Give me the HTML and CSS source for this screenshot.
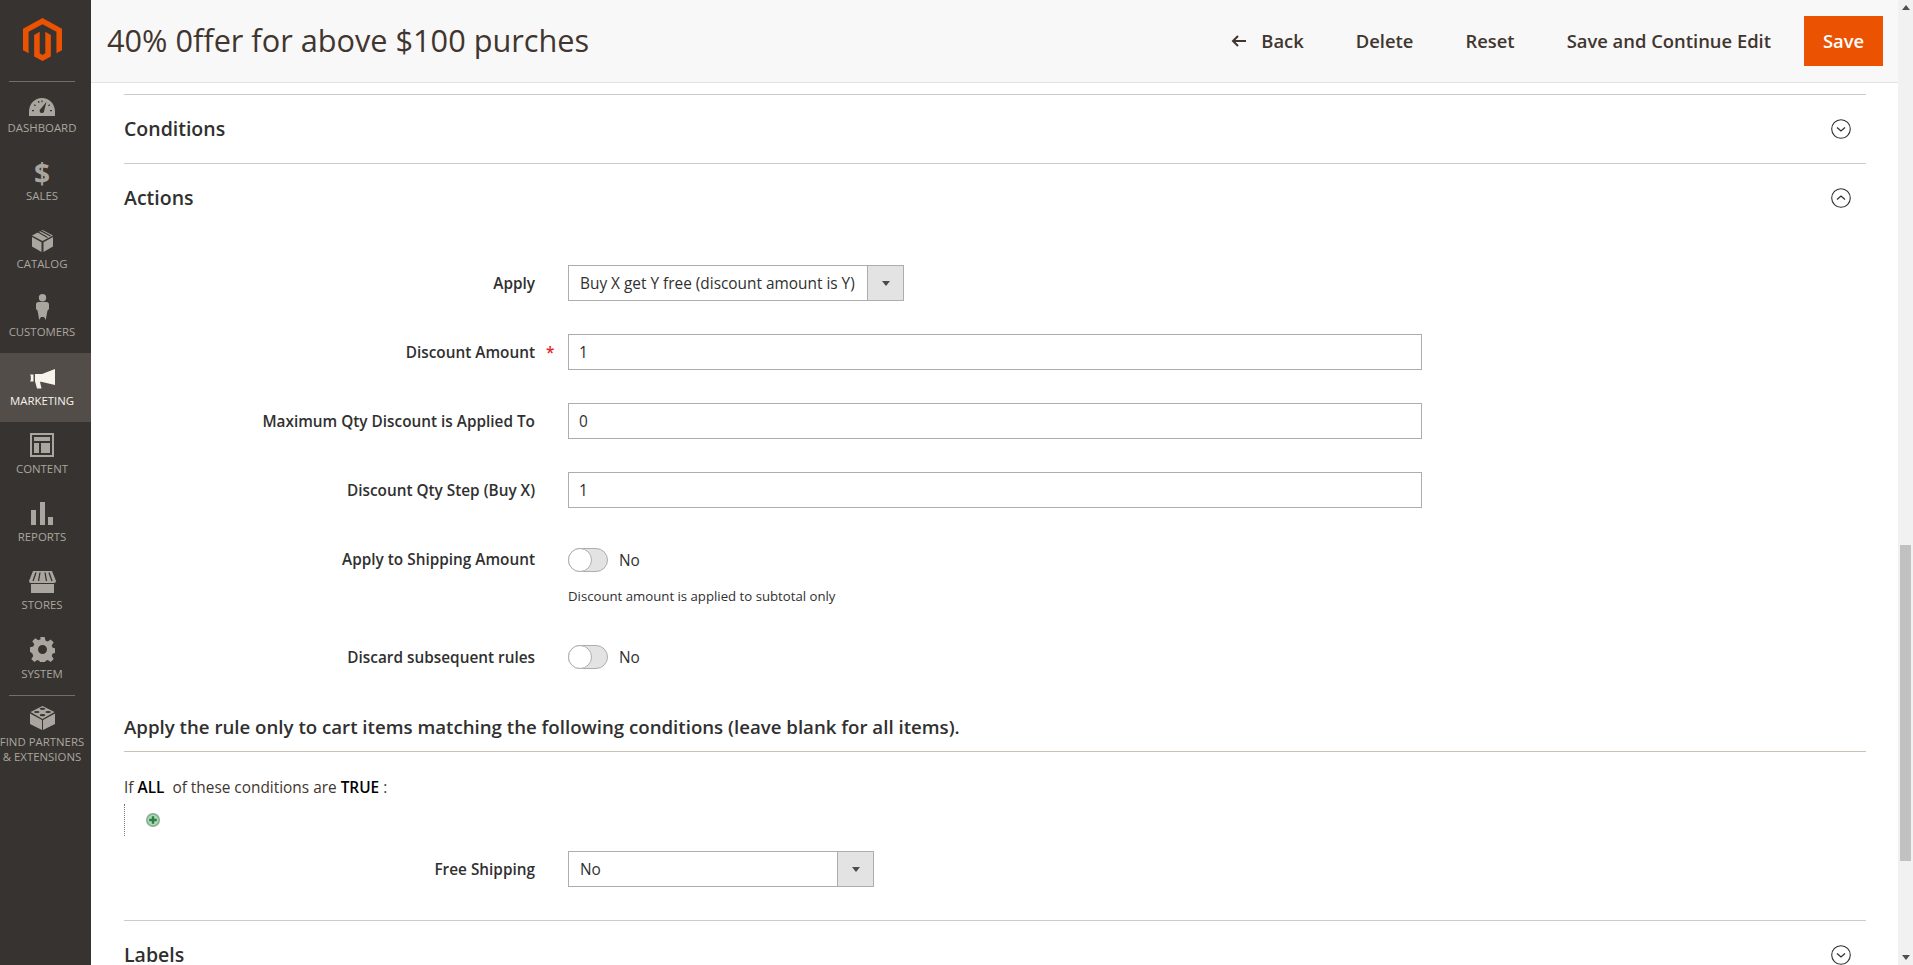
FILE: index.html
```html
<!DOCTYPE html>
<html>
<head>
    <title>40% 0ffer for above $100 purches</title>
    <link rel="stylesheet" href="styles.css">
</head>
<body>
    <div class="app">
        <nav class="sidebar">
            <div class="logo">
                <svg width="39" height="43" viewBox="1.609 0 20.782 24" preserveAspectRatio="none"><path fill="#eb5202" d="M12 24l-4.455-2.572v-12l2.97-1.715v12.001l1.485.902 1.485-.902V7.713l2.971 1.715v12L12 24zM22.391 6v12l-2.969 1.714V7.713L12 3.43 4.574 7.713v12.001L1.609 18V6L12 0l10.391 6z"/></svg>
            </div>
            <ul class="menu">
                <li class="menu-item">
                    <svg width="26" height="18" viewBox="0 0 26 18"><path fill="#aaa69f" fill-rule="evenodd" d="M13 0C5.800 0 .5 5.500 0 13v5h26v-5C25.500 5.500 20.200 0 13 0zM12 10.600 17.500 3.800 15.200 12.400a2.300 2.300 0 1 1-3.200-1.800zM3 12H5V13.200H3zM21 12h2v1.200h-2zM5.500 6.300 7 7.300 6.300 8.300 4.800 7.300zM20.500 6.300l.7 1-1.500 1-.7-1zM10 2.800l.6 1.700-1.200.4-.6-1.700zM13.600 2.400V4.200H12.400V2.400z"/></svg>
                    <span>Dashboard</span>
                </li>
                <li class="menu-item">
                    <span class="dollar">$</span>
                    <span>Sales</span>
                </li>
                <li class="menu-item">
                    <svg width="21" height="22" viewBox="0 0 21 22"><path fill="#aaa69f" d="M10.500 0 21 5.500 10.500 11 0 5.500zM0 7l9.500 5.200V22L0 16.500zM21 7v9.500L11.500 22v-9.800z"/><path fill="none" stroke="#373330" stroke-width="1.200" d="M5.500 1.800 15.500 7.400M8.500 .6 18.500 6"/></svg>
                    <span>Catalog</span>
                </li>
                <li class="menu-item">
                    <svg width="13" height="26" viewBox="0 0 13 26"><circle cx="6.500" cy="3.700" r="3.700" fill="#aaa69f"/><path fill="#aaa69f" d="M2.500 8h8c1.500 0 2.500 1 2.500 2.500V15l-1.500 1.500-.7 3.500-1 6-1.800-3-1.500 0-1.500 0L3.200 26l-1-6-.7-3.500L0 15v-4.500C0 9 1 8 2.500 8z"/></svg>
                    <span>Customers</span>
                </li>
                <li class="menu-item active">
                    <svg width="25" height="20" viewBox="0 0 25 20"><path fill="#f7f3eb" d="M25 0v16L11 12.800h-1l1.500 6.700H7L5 12.300V5h7zM0 5.500h3.500v7H0L.8 11V7z"/></svg>
                    <span>Marketing</span>
                </li>
                <li class="menu-item">
                    <svg width="24" height="24" viewBox="0 0 24 24"><path fill="#aaa69f" fill-rule="evenodd" d="M0 0h24v24H0zM2 2v20h20V2zM4 4h16v4H4zM4 10h5v10H4zM11 10h9v10h-9z"/></svg>
                    <span>Content</span>
                </li>
                <li class="menu-item">
                    <svg width="22" height="23" viewBox="0 0 22 23"><path fill="#aaa69f" d="M0 8h5v15H0zM9 0h5v23H9zM17 15h5v8h-5z"/></svg>
                    <span>Reports</span>
                </li>
                <li class="menu-item">
                    <svg width="27" height="22" viewBox="0 0 27 22"><path fill="#aaa69f" d="M4 0h19l4 10c0 1-.8 2-2 2v10H2V12c-1.200 0-2-1-2-2z"/><path stroke="#373330" stroke-width="1.300" d="M7 1.500 4 10M11 1.500 9.500 10M16 1.500 17.500 10M20 1.500 23 10"/><path stroke="#373330" stroke-width="1" d="M2 12.500h23" fill="none"/></svg>
                    <span>Stores</span>
                </li>
                <li class="menu-item">
                    <svg width="25" height="25" viewBox="0 0 25 25"><path fill="#aaa69f" fill-rule="evenodd" d="M10.300 0h4.400l.7 3.500 2.300 1 3-2 3 3-2 3 1 2.300 3.300.7v4.400l-3.300.7-1 2.300 2 3-3 3-3-2-2.300 1-.7 3.300h-4.400l-.7-3.300-2.300-1-3 2-3-3 2-3-1-2.300L0 14.700v-4.400l3.300-.7 1-2.300-2-3 3-3 3 2 2.300-1zM12.500 8a4.500 4.500 0 1 0 0 9 4.500 4.500 0 0 0 0-9z"/></svg>
                    <span>System</span>
                </li>
            </ul>
            <div class="menu-item partners">
                <svg width="25" height="24" viewBox="0 0 25 24"><path fill="#aaa69f" d="M0 7.500 12 14v10L0 18zM25 7.500V18l-12 6V14z"/><path fill="#aaa69f" d="M12.500 0 24.500 6 12.500 13 .5 6z"/><g fill="#373330"><ellipse cx="12.500" cy="2.800" rx="2.800" ry="1.100"/><ellipse cx="6.800" cy="6" rx="2.800" ry="1.100"/><ellipse cx="18.200" cy="6" rx="2.800" ry="1.100"/><ellipse cx="12.500" cy="9.200" rx="2.800" ry="1.100"/></g></svg>
                <span>Find Partners<br>&amp; Extensions</span>
            </div>
        </nav>

        <div class="main">
            <header class="page-header">
                <h1>40% 0ffer for above $100 purches</h1>
                <div class="page-actions">
                    <button type="button" class="action">
                        <svg width="16" height="12" viewBox="0 0 16 12"><path fill="none" stroke="#41362f" stroke-width="2" d="M15 6H2M7 1 2 6l5 5"/></svg>
                        Back
                    </button>
                    <button type="button" class="action">Delete</button>
                    <button type="button" class="action">Reset</button>
                    <button type="button" class="action">Save and Continue Edit</button>
                    <button type="button" class="action-save">Save</button>
                </div>
            </header>

            <div class="content">
                <div class="section-head">
                    <h2>Conditions</h2>
                    <svg class="chevron" width="20" height="20" viewBox="0 0 20 20"><circle cx="10" cy="10" r="9.300" fill="none" stroke="#303030" stroke-width="1.100"/><path fill="none" stroke="#303030" stroke-width="1.300" d="M6 8.500l4 3.500 4-3.500"/></svg>
                </div>
                <div class="section-head open">
                    <h2>Actions</h2>
                    <svg class="chevron" width="20" height="20" viewBox="0 0 20 20"><circle cx="10" cy="10" r="9.300" fill="none" stroke="#303030" stroke-width="1.100"/><path fill="none" stroke="#303030" stroke-width="1.300" d="M6 11.500l4-3.500 4 3.500"/></svg>
                </div>

                <form class="fields">
                    <div class="field">
                        <label>Apply</label>
                        <span class="req"></span>
                        <div class="select-box select-wide">
                            <select><option>Buy X get Y free (discount amount is Y)</option></select>
                            <span class="select-arrow"></span>
                        </div>
                    </div>
                    <div class="field">
                        <label>Discount Amount</label>
                        <span class="req">*</span>
                        <input type="text" value="1">
                    </div>
                    <div class="field">
                        <label>Maximum Qty Discount is Applied To</label>
                        <span class="req"></span>
                        <input type="text" value="0">
                    </div>
                    <div class="field">
                        <label>Discount Qty Step (Buy X)</label>
                        <span class="req"></span>
                        <input type="text" value="1">
                    </div>
                    <div class="field field-toggle">
                        <label>Apply to Shipping Amount</label>
                        <span class="req"></span>
                        <div class="toggle-wrap">
                            <span class="toggle"><span class="knob"></span></span>
                            <span class="toggle-text">No</span>
                        </div>
                        <p class="note">Discount amount is applied to subtotal only</p>
                    </div>
                    <div class="field field-last">
                        <label>Discard subsequent rules</label>
                        <span class="req"></span>
                        <div class="toggle-wrap">
                            <span class="toggle"><span class="knob"></span></span>
                            <span class="toggle-text">No</span>
                        </div>
                    </div>
                </form>

                <h3 class="sub-title">Apply the rule only to cart items matching the following conditions (leave blank for all items).</h3>
                <p class="rule-line">If <strong>ALL</strong>&nbsp; of these conditions are <strong>TRUE</strong> :</p>
                <div class="rule-tree">
                    <svg width="14" height="14" viewBox="0 0 14 14"><circle cx="7" cy="7" r="7" fill="#86b291"/><circle cx="7" cy="7" r="5.300" fill="#b4d6ba"/><path stroke="#2a7f42" stroke-width="2.400" d="M7 3.200v7.600M3.200 7h7.600"/></svg>
                </div>

                <div class="field field-shipping">
                    <label>Free Shipping</label>
                    <span class="req"></span>
                    <div class="select-box select-narrow">
                        <select><option>No</option></select>
                        <span class="select-arrow"></span>
                    </div>
                </div>

                <div class="section-head">
                    <h2>Labels</h2>
                    <svg class="chevron" width="20" height="20" viewBox="0 0 20 20"><circle cx="10" cy="10" r="9.300" fill="none" stroke="#303030" stroke-width="1.100"/><path fill="none" stroke="#303030" stroke-width="1.300" d="M6 8.500l4 3.500 4-3.500"/></svg>
                </div>
            </div>
        </div>

        <div class="scrollbar">
            <span class="arrow-up"></span>
            <div class="scroll-track"><div class="scroll-thumb"></div></div>
            <span class="arrow-down"></span>
        </div>
    </div>
</body>
</html>
```

FILE: styles.css
```css
* {
    box-sizing: border-box;
}

html, body {
    margin: 0;
    height: 100%;
    overflow: hidden;
}

body {
    font-family: "Open Sans", Arial, sans-serif;
    font-size: 14px;
    color: #41362f;
    background: #fff;
}

.app {
    display: grid;
    grid-template-columns: 91px 1fr 15px;
    height: 965px;
}

/* sidebar */
.sidebar {
    background: #373330;
    height: 965px;
}

.logo {
    display: flex;
    justify-content: center;
    padding: 18px 7px 0 0;
    height: 81px;
}

.menu {
    list-style: none;
    margin: 0 16px 0 9px;
    padding: 0;
    border-top: 1px solid #736e69;
    border-bottom: 1px solid #736e69;
}

.menu-item {
    height: 68.25px;
    margin: 0 -16px 0 -9px;
    display: flex;
    flex-direction: column;
    align-items: center;
    justify-content: flex-end;
    padding: 0 7px 14px 0;
    gap: 5px;
    color: #aaa69f;
    font-size: 11.4px;
    line-height: 14px;
    text-transform: uppercase;
    text-align: center;
}

.menu-item:first-child {
    height: 66.5px;
    padding-bottom: 14px;
}

.menu-item svg {
    flex: none;
}

.menu-item.active {
    background: #524d49;
    color: #f7f3eb;
}

.dollar {
    font-size: 28px;
    font-weight: 700;
    line-height: 26px;
    margin-bottom: -2px;
}

.partners {
    height: auto;
    justify-content: flex-start;
    padding-top: 10px;
    margin: 0;
    gap: 4px;
    line-height: 15px;
    white-space: nowrap;
}

/* page header */
.main {
    min-width: 0;
    height: 965px;
    overflow: hidden;
}

.page-header {
    height: 83px;
    background: #f8f8f8;
    border-bottom: 1px solid #e3e3e3;
    display: flex;
    align-items: center;
    justify-content: space-between;
    padding: 0 15px 1px 16px;
}

h1 {
    margin: 0 0 2px;
    font-size: 30.7px;
    font-weight: 400;
    color: #41362f;
}

.page-actions {
    display: flex;
    align-items: center;
    gap: 0;
}

.action {
    background: none;
    border: 0;
    padding: 0 26px;
    font-family: inherit;
    font-size: 18.4px;
    font-weight: 600;
    color: #41362f;
    display: flex;
    align-items: center;
    gap: 14px;
}

.action-save {
    width: 79px;
    height: 50px;
    margin-left: 7px;
    background: #eb5202;
    border: 0;
    color: #fff;
    font-family: inherit;
    font-size: 18.4px;
    font-weight: 600;
}

/* sections */
.content {
    padding: 11px 32px 0 33px;
}

.section-head {
    height: 69px;
    border-top: 1px solid #cccccc;
    display: flex;
    align-items: center;
    justify-content: space-between;
    padding-right: 15px;
}

.section-head.open {
    height: 102px;
    align-items: flex-start;
    padding-top: 24px;
}

h2 {
    margin: 0;
    font-size: 19.5px;
    line-height: 26px;
    font-weight: 600;
    color: #303030;
}

.section-head.open h2 {
    margin-top: -3px;
}

.fields {
    display: block;
}

.field {
    display: grid;
    grid-template-columns: 411px 33px 854px;
    align-items: start;
    min-height: 36px;
    margin-bottom: 33px;
}

.field label {
    text-align: right;
    font-size: 15.35px;
    line-height: 36px;
    font-weight: 600;
    color: #303030;
}

.req {
    color: #e22626;
    font-size: 15.3px;
    line-height: 36px;
    font-weight: 600;
    padding-left: 11px;
}

.field input {
    height: 36px;
    width: 100%;
    border: 1px solid #adadad;
    padding: 0 10px;
    font-family: inherit;
    font-size: 15.4px;
    color: #303030;
    background: #fff;
}

.select-box {
    display: flex;
    height: 36px;
    border: 1px solid #adadad;
    background: #fff;
}

.select-wide {
    width: 336px;
}

.select-narrow {
    width: 306px;
}

.select-box select {
    flex: 1;
    min-width: 0;
    appearance: none;
    border: 0;
    background: none;
    padding: 0 11px;
    font-family: inherit;
    font-size: 15.4px;
    color: #303030;
}

.select-arrow {
    width: 36px;
    background: #e3e3e3;
    border-left: 1px solid #adadad;
    display: flex;
    align-items: center;
    justify-content: center;
}

.select-arrow::after {
    content: "";
    border-left: 4px solid transparent;
    border-right: 4px solid transparent;
    border-top: 5px solid #514943;
}

.toggle-wrap {
    display: flex;
    align-items: center;
    gap: 11px;
    height: 36px;
}

.toggle {
    display: block;
    width: 40px;
    height: 24px;
    border: 1px solid #adadad;
    border-radius: 12px;
    background: #e3e3e3;
    margin: 0;
}

.knob {
    display: block;
    width: 24px;
    height: 24px;
    margin: -1px 0 0 -1px;
    border: 1px solid #adadad;
    border-radius: 50%;
    background: #fff;
}

.toggle-text {
    font-size: 15.4px;
    color: #303030;
}

.field-toggle {
    margin-bottom: 34px;
}

.field-toggle .toggle-wrap {
    margin-top: 1px;
}

.note {
    grid-column: 3;
    margin: 9px 0 0;
    font-size: 13.2px;
    line-height: 18px;
    color: #303030;
}

.field-last {
    margin-bottom: 40px;
}

.sub-title {
    margin: 0;
    font-size: 18.66px;
    font-weight: 600;
    color: #303030;
    line-height: 24px;
    padding-bottom: 12px;
    border-bottom: 1px solid #cac3b4;
}

.rule-line {
    margin: 26px 0 0;
    font-size: 15.4px;
    line-height: 20px;
    color: #41362f;
}

.rule-line strong {
    color: #000;
    font-weight: 600;
}

.rule-tree {
    height: 32px;
    margin-top: 6px;
    border-left: 1px dotted #777;
    padding: 9px 0 0 21px;
    display: flex;
    align-items: flex-start;
}

.field-shipping {
    margin: 15px 0 33px;
}

/* scrollbar */
.scrollbar {
    background: #f1f1f1;
    height: 965px;
    display: flex;
    flex-direction: column;
    align-items: center;
}

.arrow-up, .arrow-down {
    display: block;
    height: 15px;
    width: 8px;
    flex: none;
    position: relative;
}

.arrow-up::after, .arrow-down::after {
    content: "";
    position: absolute;
    left: 0;
    top: 5px;
    border-left: 4px solid transparent;
    border-right: 4px solid transparent;
}

.arrow-up::after {
    border-bottom: 5px solid #505050;
}

.arrow-down::after {
    border-top: 5px solid #505050;
}

.scroll-track {
    flex: 1;
    width: 100%;
    padding: 530px 2px 89px;
}

.scroll-thumb {
    height: 100%;
    background: #c1c1c1;
}
```
